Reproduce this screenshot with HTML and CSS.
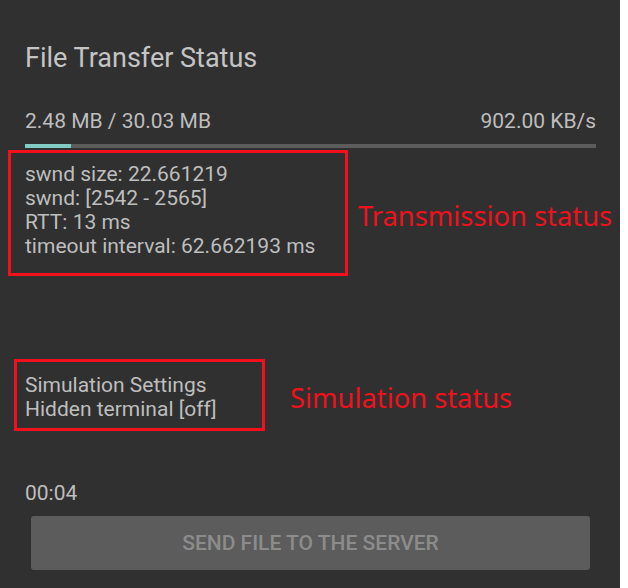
FILE: index.html
```html
<!DOCTYPE html>
<html>
<head>
<meta charset="utf-8">
<link rel="stylesheet" href="styles.css">
</head>
<body>
<div class="screen">
  <h1 class="title">File Transfer Status</h1>
  <div class="stats">
    <span>2.48 MB / 30.03 MB</span>
    <span>902.00 KB/s</span>
  </div>
  <div class="progress"><div class="fill" style="width:8%"></div></div>
  <div class="row row-tx">
    <div class="box box-tx">
      <div>swnd size: 22.661219</div>
      <div>swnd: [2542 - 2565]</div>
      <div>RTT: 13 ms</div>
      <div>timeout interval: 62.662193 ms</div>
    </div>
    <div class="label label-tx">Transmission status</div>
  </div>
  <div class="row row-sim">
    <div class="box box-sim">
      <div>Simulation Settings</div>
      <div>Hidden terminal [off]</div>
    </div>
    <div class="label label-sim">Simulation status</div>
  </div>
  <div class="timer">00:04</div>
  <button class="send">SEND FILE TO THE SERVER</button>
</div>
</body>
</html>
```
FILE: styles.css
```css
html, body {
  margin: 0;
  padding: 0;
  background: #ffffff;
}
.screen {
  width: 620px;
  height: 588px;
  background: #303030;
  box-sizing: border-box;
  padding: 42px 24px 0 25px;
  display: flex;
  flex-direction: column;
  font-family: Roboto, "Liberation Sans", sans-serif;
  color: #bebebe;
  overflow: hidden;
}
.title {
  margin: 0;
  font-size: 27px;
  font-weight: 400;
  line-height: 32px;
  color: #c4c4c4;
}
.stats {
  margin-top: 35px;
  display: flex;
  justify-content: space-between;
  font-size: 21px;
  line-height: 24px;
}
.progress {
  margin-top: 11px;
  height: 4px;
  background: #5c5c5c;
}
.fill {
  height: 100%;
  background: #80cbc4;
}
.row {
  display: flex;
  align-items: center;
  margin-right: -24px;
}
.box {
  flex-shrink: 0;
  border: 3px solid #f2101c;
  box-sizing: border-box;
  font-size: 21px;
  line-height: 24px;
}
.row-tx {
  margin-left: -17px;
  margin-top: 2px;
}
.box-tx {
  width: 340px;
  padding: 9px 0 15px 14px;
}
.label {
  flex-shrink: 0;
  white-space: nowrap;
  color: #f2101c;
  font-family: "Noto Sans", "Open Sans", sans-serif;
  font-size: 27.3px;
  line-height: 32px;
  margin-top: 6px;
}
.label-tx {
  margin-left: 10px;
}
.row-sim {
  margin-left: -11px;
  margin-top: 83px;
}
.box-sim {
  width: 251px;
  padding: 11px 0 7px 8px;
}
.label-sim {
  margin-left: 25px;
}
.timer {
  margin-top: 50px;
  font-size: 21px;
  line-height: 24px;
}
.send {
  margin: 11px 6px 0 6px;
  height: 54px;
  border: none;
  border-radius: 3px;
  background: #5c5c5c;
  color: #8c8c8c;
  font-family: Roboto, "Liberation Sans", sans-serif;
  font-size: 21px;
  font-weight: 500;
}
```
